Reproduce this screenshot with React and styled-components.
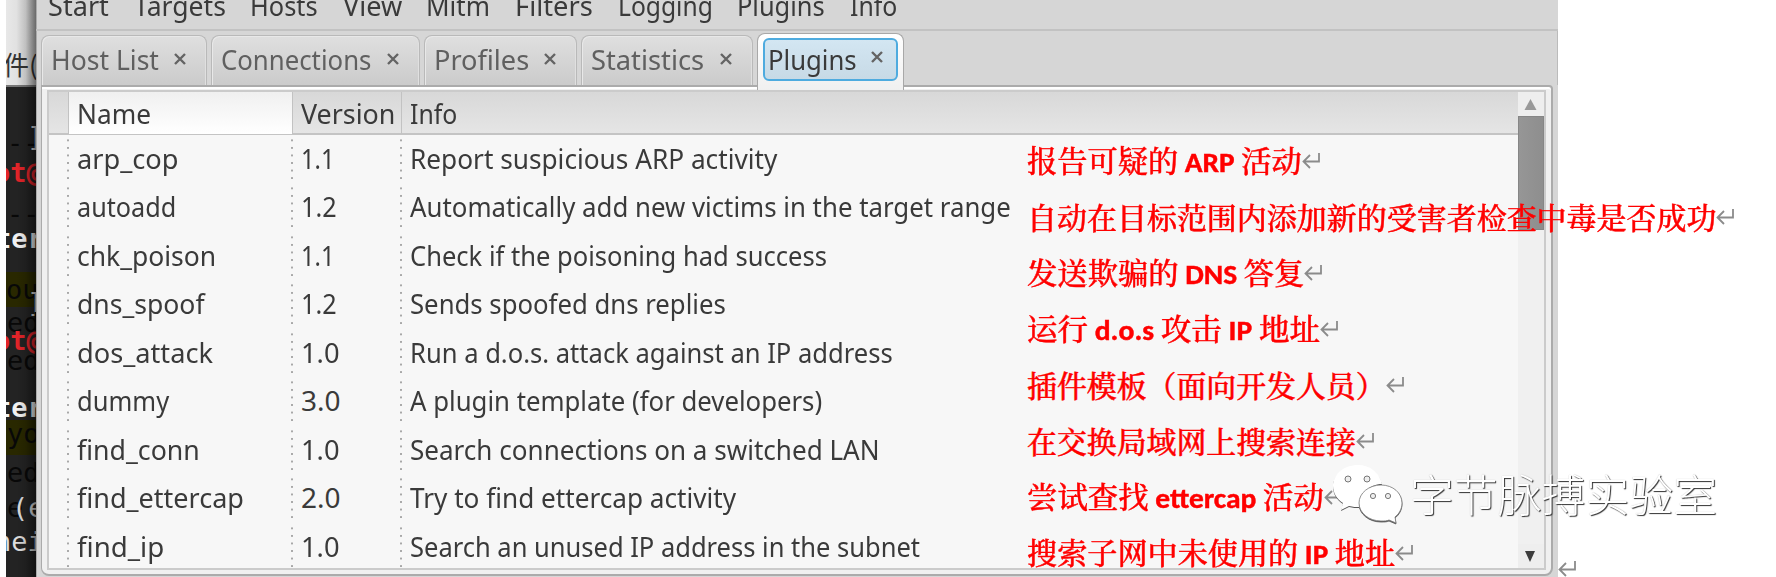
import React, { useLayoutEffect, useRef } from "react";
import styled, { createGlobalStyle, css } from "styled-components";

const GlobalStyle = createGlobalStyle`
  * { box-sizing: border-box; }
  body { margin: 0; background: #fff; overflow: hidden; }
`;

const uiFont = `"Noto Sans", "Open Sans", sans-serif`;
const cjkFont = `"Noto Serif CJK SC", "Noto Sans CJK SC", serif`;

const Page = styled.div`
  position: relative;
  display: flex;
  width: 1776px;
  height: 577px;
  padding-left: 6px;
  overflow: hidden;
  background: #fff;
  font-family: ${uiFont};
  font-size: 28px;
  color: #3a3a3a;
`;

const FitBox = styled.span`
  display: block;
  flex: none;
  width: ${(p) => p.$w}px;
  white-space: pre;
`;
const FitInner = styled.span`
  display: inline-block;
  transform-origin: 0 50%;
`;

/* Condenses a label horizontally so that it fills the given width. */
function Fit({ w, children }) {
  const ref = useRef(null);
  useLayoutEffect(() => {
    const el = ref.current;
    const apply = () => {
      if (el.offsetWidth) el.style.transform = `scaleX(${w / el.offsetWidth})`;
    };
    apply();
    document.fonts?.ready.then(apply);
  }, [w, children]);
  return (
    <FitBox $w={w}>
      <FitInner ref={ref}>{children}</FitInner>
    </FitBox>
  );
}

/* ---------- terminal behind the window ---------- */
const Backdrop = styled.aside`
  flex: none;
  position: relative;
  display: flex;
  flex-direction: column;
  width: 30px;
  height: 577px;
  overflow: hidden;
  &::after {
    content: "";
    position: absolute;
    inset: 0;
    background: linear-gradient(90deg, transparent 35%, rgba(0, 0, 0, 0.12) 65%, rgba(0, 0, 0, 0.5));
  }
`;
const BackdropMenu = styled.div`
  flex: none;
  height: 87px;
  padding-top: 49px;
  background: linear-gradient(90deg, #e8e8e8, #d4d4d4);
  border-bottom: 2px solid #777;
  font: 26px/30px "Noto Sans CJK SC", sans-serif;
  color: #333;
  white-space: nowrap;
  text-indent: -3px;
`;
const Terminal = styled.div`
  flex: 1;
  position: relative;
  background: #232323;
  font-family: "DejaVu Sans Mono", monospace;
  font-size: 27px;
  white-space: pre;
`;
const Band = styled.div`
  position: absolute;
  left: 0;
  top: ${(p) => p.$y - 87}px;
  width: 30px;
  height: 35px;
  background: #292800;
`;
const Glyphs = styled.span`
  position: absolute;
  left: ${(p) => p.$x - 6}px;
  top: ${(p) => p.$y - 111}px;
  line-height: 30px;
  ${(p) => p.$tone === "ghost" && css`color: #080808;`}
  ${(p) => p.$tone === "red" && css`color: #e32429; font-weight: 700;`}
  ${(p) => p.$tone === "bold" && css`color: #f2f2f2; font-weight: 700;`}
  ${(p) => p.$tone === "plain" && css`color: #ddd;`}
`;
const terminalText = [
  ["--", 7, 152, "ghost"],
  ["]", 27, 146, "plain"],
  ["ot@", -6, 182, "red"],
  ["--", 7, 223, "ghost"],
  ["ter", -5, 248, "bold"],
  ["ou", 6, 299, "ghost"],
  ["]", 27, 312, "plain"],
  ["ed", 7, 332, "ghost"],
  ["ot@", -6, 350, "red"],
  ["ed", 7, 370, "ghost"],
  ["ter", -5, 417, "bold"],
  ["yo", 7, 443, "ghost"],
  ["ed", 7, 482, "ghost"],
  ["e", 7, 517, "ghost"],
  ["(e", 12, 517, "plain"],
  ["hei", -5, 551, "plain"],
];

/* ---------- application window ---------- */
const Window = styled.main`
  flex: none;
  display: flex;
  flex-direction: column;
  width: 1522px;
  height: 577px;
  background: #d6d6d6;
  box-shadow: inset 1px 0 #aaa;
`;
const MenuBar = styled.nav`
  flex: none;
  display: flex;
  gap: 24.6px;
  height: 31px;
  padding-left: 12px;
  border-bottom: 2px solid #c2c2c2;
  line-height: 30px;
  & > span { margin-top: -10px; }
`;
const TabStrip = styled.div`
  flex: none;
  display: flex;
  align-items: flex-end;
  gap: 4px;
  height: 54px;
  padding-left: 5px;
  border-right: 1px solid #bbb;
`;
const Tab = styled.div`
  display: flex;
  align-items: center;
  justify-content: space-between;
  width: ${(p) => p.$w}px;
  height: 50px;
  padding: 0 20px 4px 9px;
  border: 1px solid #b9b9b9;
  border-width: 1px 1px 0;
  border-radius: 8px 8px 0 0;
  background: linear-gradient(#dfdfdf, #cbcbcb);
  box-shadow: inset 1px 1px #e8e8e8, inset -1px 0 #e0e0e0;
  line-height: 30px;
  color: #606060;
  ${(p) =>
    p.$active &&
    css`
      position: relative;
      height: 57px;
      margin-bottom: -5px;
      padding: 3px 5px 9px;
      border-color: #a8a8a8;
      background: linear-gradient(#fff, #f0f0f0);
      box-shadow: none;
      color: #3a3a3a;
    `}
`;
const FocusRing = styled.div`
  flex: none;
  display: flex;
  align-items: center;
  justify-content: space-between;
  width: 135px;
  height: 43px;
  padding: 0 13px 1px 3px;
  border: 2px solid #4eabdf;
  border-radius: 6px;
  background: linear-gradient(#d3e6f2, #c7dae6);
`;
const CloseIcon = styled.svg`
  flex: none;
  width: 12px;
  height: 12px;
  margin-top: ${(p) => p.$dy}px;
  stroke: #646464;
  stroke-width: 2.4;
`;
const Close = ({ dy = 1 }) => (
  <CloseIcon viewBox="0 0 12 12" $dy={dy}>
    <path d="M1 1 11 11M11 1 1 11" />
  </CloseIcon>
);

const Pane = styled.section`
  flex: none;
  width: 1512px;
  height: 491px;
  margin-left: 5px;
  padding: 3px 5px 4px 5px;
  border: 2px solid #ababab;
  border-left-width: 1px;
  border-radius: 0 4px 8px 8px;
  background: #f0f0f0;
  box-shadow: inset 0 2px #fff;
`;
const Frame = styled.div`
  display: flex;
  width: 100%;
  height: 480px;
  border: 2px solid #cbcbcb;
  background: #f7f7f7;
`;
const Table = styled.div`
  flex: 1;
  min-width: 0;
  overflow: hidden;
`;
const Row = styled.div`
  display: grid;
  grid-template-columns: 20px 224px 109px 1fr;
  height: 48.5px;
`;
const HeaderRow = styled(Row)`
  height: 43px;
  border-bottom: 2px solid #c4c4c4;
  background: linear-gradient(#d8d8d8, #e5e5e5);
`;
const HeaderCell = styled.div`
  padding: 1px 0 0 8px;
  border-right: ${(p) => (p.$last ? 0 : 1)}px solid #c2c2c2;
  line-height: 41px;
  ${(p) => p.$sorted && css`background: linear-gradient(#f0f0f0, #fff);`}
`;
const Cell = styled.div`
  padding: 2.6px 0 0 8px;
  line-height: 41px;
  ${(p) =>
    !p.$last &&
    css`
      background: linear-gradient(#a8a8a8 2px, transparent 2px) right 0 top 4px / 2px 7.55px repeat-y;
      background-clip: content-box;
      padding-bottom: 3px;
      background-origin: border-box;
    `}
`;
const Scrollbar = styled.div`
  flex: none;
  display: flex;
  flex-direction: column;
  width: 26px;
  background: #f0f0f0;
`;
const Stepper = styled.svg`
  flex: none;
  width: 26px;
  height: 24px;
  background: #eee;
  fill: ${(p) => p.$fill};
`;
const Thumb = styled.div`
  flex: none;
  height: 114px;
  background: linear-gradient(90deg, #969696, #8e8e8e);
  border: 1px solid #868686;
`;
const Trough = styled.div`
  flex: 1;
`;

/* ---------- annotations over the window ---------- */
const Notes = styled.div`
  position: absolute;
  left: 1027px;
  top: 133px;
  z-index: 2;
  display: flex;
  flex-direction: column;
  color: #ff0000;
  font-family: ${cjkFont};
  font-weight: 500;
  font-size: 29.9px;
  -webkit-text-stroke: 0.45px #ff0000;
`;
const Note = styled.div`
  display: flex;
  align-items: center;
  height: 56px;
  line-height: 56px;
`;
const Latin = styled.b`
  font-family: Carlito, Lato, sans-serif;
  font-weight: 700;
  font-size: 29px;
`;
const ReturnMark = styled.svg`
  flex: none;
  width: 18px;
  height: 16px;
  fill: none;
  stroke: #8b8b8b;
  stroke-width: 1.8;
`;
const Mark = () => (
  <ReturnMark viewBox="0 0 18 16">
    <path d="M17 0V8.5H1.5M8 2 1.5 8.5 8 15" />
  </ReturnMark>
);
const EndMark = styled.div`
  position: absolute;
  left: 1558px;
  top: 561px;
  line-height: 0;
`;
const Watermark = styled.div`
  position: absolute;
  left: 1332px;
  top: 463px;
  z-index: 3;
  display: flex;
  align-items: center;
  gap: 6px;
  height: 64px;
  font: 300 44px/60px "Noto Sans CJK SC", sans-serif;
  color: #fff;
  text-shadow: 1px 1px 1px #333, 0 0 1px #bbb;
  & > span { height: 64px; }
`;
const ChatLogo = styled.svg`
  flex: none;
  width: 72px;
  height: 64px;
  filter: drop-shadow(0.7px 1px 0.6px #555);
`;

const menus = [["Start", 61], ["Targets", 92], ["Hosts", 68], ["View", 59], ["Mitm", 64], ["Filters", 78], ["Logging", 95], ["Plugins", 88], ["Info", 47]];
const tabs = [["Host List", 108, 166], ["Connections", 150, 209], ["Profiles", 95, 153], ["Statistics", 113, 172]];
const plugins = [
  ["arp_cop", 102, "1.1", 34, "Report suspicious ARP activity", 367],
  ["autoadd", 99, "1.2", 36, "Automatically add new victims in the target range", 601],
  ["chk_poison", 139, "1.1", 34, "Check if the poisoning had success", 417],
  ["dns_spoof", 128, "1.2", 36, "Sends spoofed dns replies", 316],
  ["dos_attack", 136, "1.0", 39, "Run a d.o.s. attack against an IP address", 483],
  ["dummy", 92, "3.0", 40, "A plugin template (for developers)", 412],
  ["find_conn", 123, "1.0", 39, "Search connections on a switched LAN", 470],
  ["find_ettercap", 167, "2.0", 40, "Try to find ettercap activity", 326],
  ["find_ip", 87, "1.0", 39, "Search an unused IP address in the subnet", 510],
];
const notes = [
  [275, ["报告可疑的", " ARP ", "活动"]],
  [689, ["自动在目标范围内添加新的受害者检查中毒是否成功"]],
  [277, ["发送欺骗的", " DNS ", "答复"]],
  [293, ["运行", " d.o.s ", "攻击", " IP ", "地址"]],
  [359, ["插件模板（面向开发人员）"]],
  [329, ["在交换局域网上搜索连接"]],
  [297, ["尝试查找", " ettercap ", "活动"]],
  [368, ["搜索子网中未使用的", " IP ", "地址"]],
];

export default function App() {
  return (
    <>
      <GlobalStyle />
      <Page>
        <Backdrop>
          <BackdropMenu>件(</BackdropMenu>
          <Terminal>
            <Band $y={272} />
            <Band $y={420} />
            {terminalText.map(([t, x, y, tone], i) => (
              <Glyphs key={i} $x={x} $y={y} $tone={tone}>{t}</Glyphs>
            ))}
          </Terminal>
        </Backdrop>

        <Window>
          <MenuBar>
            {menus.map(([t, w]) => <Fit key={t} w={w}>{t}</Fit>)}
          </MenuBar>
          <TabStrip>
            {tabs.map(([t, w, full]) => (
              <Tab key={t} $w={full}>
                <Fit w={w}>{t}</Fit>
                <Close />
              </Tab>
            ))}
            <Tab $active $w={147}>
              <FocusRing>
                <Fit w={89}>Plugins</Fit>
                <Close dy={-3} />
              </FocusRing>
            </Tab>
          </TabStrip>
          <Pane>
            <Frame>
              <Table>
                <HeaderRow>
                  <HeaderCell />
                  <HeaderCell $sorted><Fit w={74}>Name</Fit></HeaderCell>
                  <HeaderCell><Fit w={94}>Version</Fit></HeaderCell>
                  <HeaderCell $last><Fit w={47}>Info</Fit></HeaderCell>
                </HeaderRow>
                {plugins.map(([name, nw, ver, vw, info, iw]) => (
                  <Row key={name}>
                    <Cell />
                    <Cell><Fit w={nw}>{name}</Fit></Cell>
                    <Cell><Fit w={vw}>{ver}</Fit></Cell>
                    <Cell $last><Fit w={iw}>{info}</Fit></Cell>
                  </Row>
                ))}
              </Table>
              <Scrollbar>
                <Stepper viewBox="0 0 26 24" $fill="#999"><path d="M12.5 7 18.5 18h-12z" /></Stepper>
                <Thumb />
                <Trough />
                <Stepper viewBox="0 0 26 24" $fill="#3d3d3d"><path d="M7 7h10L12 18z" /></Stepper>
              </Scrollbar>
            </Frame>
          </Pane>
        </Window>

        <Notes>
          {notes.map(([w, parts]) => (
            <Note key={parts[0]}>
              <Fit w={w}>
                {parts.map((t, i) => (i % 2 ? <Latin key={i}>{t}</Latin> : t))}
              </Fit>
              <Mark />
            </Note>
          ))}
        </Notes>
        <EndMark><Mark /></EndMark>

        <Watermark>
          <ChatLogo viewBox="0 0 72 64">
            <path fill="#fff" d="M26 2C12 2 1 11 1 23c0 7 4 13 10 17l-2 7 8-4c4 1 7 1 10 1 0-13 11-23 23-23C48 10 38 2 26 2Z" />
            <path fill="#fff" d="M49 22c12 0 21 8 21 18 0 6-3 11-7 14l1 6-7-3c-2 1-5 1-8 1-12 0-22-8-22-18s10-18 22-18Z" stroke="#777" strokeWidth=".8" />
            <g fill="#eee" stroke="#777" strokeWidth="1">
              <circle cx="16" cy="16" r="3" />
              <circle cx="35" cy="16" r="3" />
              <circle cx="41" cy="33" r="2.6" />
              <circle cx="56" cy="33" r="2.6" />
            </g>
          </ChatLogo>
          <Fit w={307}>字节脉搏实验室</Fit>
        </Watermark>
      </Page>
    </>
  );
}
